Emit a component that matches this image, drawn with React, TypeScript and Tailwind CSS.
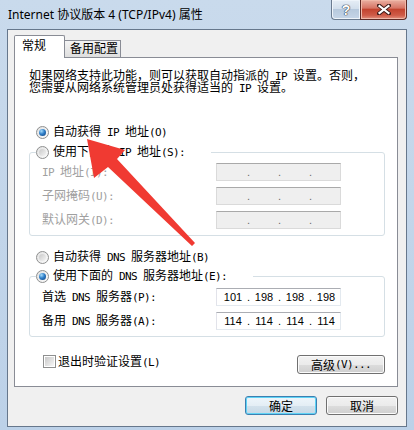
import type { ReactNode } from "react";

const mono = "whitespace-pre font-['DejaVu_Sans_Mono',monospace] text-[11px] tracking-[-0.62px]";

// SimSun-like mix: CJK at 12px, ASCII at a 6px monospace pitch
function Mix({ s }: { s: string }) {
  const parts = s.split(/([\x20-\x7e]+)/).filter(Boolean);
  return (
    <>
      {parts.map((p, i) =>
        /^[\x20-\x7e]+$/.test(p) ? (
          <span key={i} className={mono}>
            {p}
          </span>
        ) : (
          <span key={i}>{p}</span>
        )
      )}
    </>
  );
}

function Radio({ on }: { on?: boolean }) {
  return (
    <span className="flex h-[13px] w-[13px] shrink-0 items-center justify-center rounded-full border border-[#8e8f8f] bg-linear-to-br from-[#e2e2e2] to-[#fbfbfb]">
      {on ? (
        <span className="h-[7px] w-[7px] rounded-full bg-[radial-gradient(circle_at_35%_30%,#a6dcfb_0%,#2f7fc9_45%,#0f3d78_100%)]" />
      ) : (
        <span className="h-[7px] w-[7px] rounded-full bg-linear-to-br from-[#c9c9c9] to-[#f4f4f4]" />
      )}
    </span>
  );
}

function RadioRow({ on, label, legend }: { on?: boolean; label: string; legend?: boolean }) {
  return (
    <div className={legend ? "flex h-[16px] items-center gap-[4px] pr-[26px] leading-[16px]" : "ml-[21px] flex h-[16px] items-center gap-[4px] leading-[16px]"}>
      <Radio on={on} />
      <span className="whitespace-nowrap">
        <Mix s={label} />
      </span>
    </div>
  );
}

function IpBox({ values, disabled }: { values?: string[]; disabled?: boolean }) {
  const segs = values ?? ["", "", "", ""];
  return (
    <div
      className={
        disabled
          ? "flex h-[18px] w-[125px] items-center border border-[#dadada] border-t-[#a9a9a9] bg-[#efefef] pl-[3px] font-['Liberation_Sans',sans-serif] text-[11px] text-[#6d6d6d]"
          : "flex h-[18px] w-[125px] items-center border border-[#e3e9ef] border-t-[#abadb3] border-l-[#e2e3ea] bg-white pl-[3px] font-['Liberation_Sans',sans-serif] text-[11px] text-black"
      }
    >
      {segs.map((v, i) => (
        <div key={i} className="flex items-center">
          {i > 0 && <span className="w-[5px] text-center leading-[16px]">.</span>}
          <span className="w-[26px] text-center leading-[16px]">{v}</span>
        </div>
      ))}
    </div>
  );
}

function Field({ label, children, gray }: { label: string; children: ReactNode; gray?: boolean }) {
  return (
    <div className="flex h-[18px] items-center">
      <div className={gray ? "w-[174px] whitespace-nowrap leading-[16px] text-[#a0a0a0]" : "w-[174px] whitespace-nowrap leading-[16px]"}>
        <Mix s={label} />
      </div>
      {children}
    </div>
  );
}

function Btn({ children, className, def }: { children: ReactNode; className: string; def?: boolean }) {
  return (
    <div
      className={
        (def
          ? "border-[#3c7fb1] shadow-[inset_0_0_0_1px_#5fd3f5] bg-[linear-gradient(#eef6fb_0%,#e4eef5_50%,#d3e2ec_50%,#c6d8e6_100%)] "
          : "border-[#707070] shadow-[inset_0_0_0_1px_#fbfbfb] bg-[linear-gradient(#f2f2f2_0%,#ebebeb_50%,#dddddd_50%,#cfcfcf_100%)] ") +
        "flex h-[19px] items-center justify-center rounded-[3px] border leading-[16px] " +
        className
      }
    >
      {children}
    </div>
  );
}

export default function App() {
  return (
    <div className="relative h-[430px] w-[414px] overflow-hidden bg-linear-to-b from-[#c9daec] to-[#bcd1e8] font-['Noto_Sans_CJK_SC',sans-serif] text-[12px] text-black">
      {/* title bar */}
      <div className="flex h-[29px]">
        <div className="whitespace-nowrap pl-[8px] pt-[6px] font-['Noto_Sans','Noto_Sans_CJK_SC',sans-serif] text-[12px] leading-[17px]">
          Internet 协议版本 4 (TCP/IPv4) 属性
        </div>
        <div className="ml-auto mr-[7px] flex h-[20px]">
          <div className="flex w-[29px] items-center justify-center rounded-bl-[4px] border border-t-0 border-r-0 border-[#6a7b90] bg-[linear-gradient(#e6eef6_0%,#d3dfec_45%,#b7c9dd_50%,#c6d6e8_100%)] shadow-[inset_0_0_0_1px_#eef4fa]">
            <span className="font-['Liberation_Sans',sans-serif] text-[14px] font-bold leading-[16px] text-white [text-shadow:0_0_1px_#2c3440,0_0_1px_#2c3440,0_0_1px_#2c3440]">
              ?
            </span>
          </div>
          <div className="flex w-[47px] items-center justify-center rounded-br-[4px] border border-t-0 border-[#5e2a25] bg-[linear-gradient(#eab0a2_0%,#d77565_42%,#c3442f_50%,#cf5b47_80%,#e2917f_100%)] shadow-[inset_0_0_0_1px_#f0b8a8]">
            <svg width="14" height="11" viewBox="0 0 14 11">
              <path d="M2 1.5 L12 9.5 M12 1.5 L2 9.5" stroke="#3b1a17" strokeWidth="4" strokeLinecap="round" />
              <path d="M2.5 2 L11.5 9 M11.5 2 L2.5 9" stroke="#ffffff" strokeWidth="2.2" strokeLinecap="square" />
            </svg>
          </div>
        </div>
      </div>

      {/* client area */}
      <div className="ml-[7px] h-[398px] w-[400px] border border-[#66778c] bg-[#f0f0f0]">
        {/* tabs */}
        <div className="flex h-[27px] items-end pl-[6px]">
          <div className="relative z-10 -mb-px h-[23px] w-[51px] rounded-t-[2px] border border-b-0 border-[#898c95] bg-white pl-[7px] pt-[1px] leading-[16px]">
            常规
          </div>
          <div className="h-[17px] w-[56px] border border-b-0 border-l-0 border-[#898c95] bg-linear-to-b from-[#f4f4f4] to-[#dedede] pl-[5px] leading-[14px]">
            备用配置
          </div>
        </div>

        {/* page */}
        <div className="ml-[6px] h-[330px] w-[384px] border border-[#898c95] bg-white">
          <div className="mt-[11px] pl-[14px] leading-[12px] whitespace-nowrap">
            <div className="h-[12px]">
              <Mix s="如果网络支持此功能，则可以获取自动指派的 IP 设置。否则，" />
            </div>
            <div className="h-[12px]">
              <Mix s="您需要从网络系统管理员处获得适当的 IP 设置。" />
            </div>
          </div>

          <div className="mt-[31px]">
            <RadioRow on label="自动获得 IP 地址(O)" />
          </div>

          <fieldset className="ml-[14px] mt-[4px] w-[356px] rounded-[3px] border border-[#d5dfe5] pb-[6px]">
            <legend className="ml-[6px]">
              <RadioRow label="使用下面的 IP 地址(S):" legend />
            </legend>
            <div className="mt-[3px] flex flex-col gap-[6px] pl-[12px]">
              <Field label="IP 地址(I):" gray>
                <IpBox disabled />
              </Field>
              <Field label="子网掩码(U):" gray>
                <IpBox disabled />
              </Field>
              <Field label="默认网关(D):" gray>
                <IpBox disabled />
              </Field>
            </div>
          </fieldset>

          <div className="mt-[13px]">
            <RadioRow label="自动获得 DNS 服务器地址(B)" />
          </div>

          <fieldset className="ml-[14px] mt-[3px] w-[356px] rounded-[3px] border border-[#d5dfe5] pb-[6px]">
            <legend className="ml-[6px]">
              <RadioRow on label="使用下面的 DNS 服务器地址(E):" legend />
            </legend>
            <div className="mt-[4px] flex flex-col gap-[6px] pl-[12px]">
              <Field label="首选 DNS 服务器(P):">
                <IpBox values={["101", "198", "198", "198"]} />
              </Field>
              <Field label="备用 DNS 服务器(A):">
                <IpBox values={["114", "114", "114", "114"]} />
              </Field>
            </div>
          </fieldset>

          <div className="ml-[14px] mt-[18px] flex w-[356px] items-start justify-between">
            <div className="ml-[14px] flex h-[13px] items-center gap-[2px] leading-[13px]">
              <span className="flex h-[13px] w-[13px] items-center justify-center border border-[#8e8f8f] bg-white">
                <span className="h-[9px] w-[9px] bg-linear-to-br from-[#c8c8c8] to-[#f7f7f7]" />
              </span>
              <span className="whitespace-nowrap">
                <Mix s="退出时验证设置(L)" />
              </span>
            </div>
            <Btn className="w-[88px]">
              <Mix s="高级(V)..." />
            </Btn>
          </div>
        </div>

        {/* dialog buttons */}
        <div className="mt-[9px] flex justify-end gap-[9px] pr-[8px]">
          <Btn className="w-[72px]" def>
            确定
          </Btn>
          <Btn className="w-[72px]">取消</Btn>
        </div>
      </div>

      {/* red annotation arrow */}
      <svg className="pointer-events-none absolute left-0 top-0" width="414" height="430" viewBox="0 0 414 430">
        <polygon
          points="87,139 125,150 117,159 195,243 192,246 108,167 94,178"
          fill="#f03a32"
        />
      </svg>
    </div>
  );
}
